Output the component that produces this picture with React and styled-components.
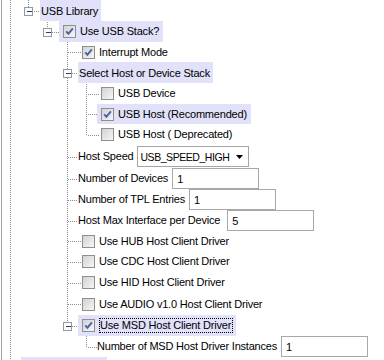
import React from "react";
import styled, { createGlobalStyle } from "styled-components";

const GlobalStyle = createGlobalStyle`
  html, body {
    margin: 0;
    padding: 0;
    background: #fff;
    overflow: hidden;
  }
  body {
    font-family: "Liberation Sans", Arial, sans-serif;
    font-size: 11px;
    color: #000;
  }
`;

// x of the tree line and of the renderer for each depth (page px)
const LINE = { "-1": 10, 0: 28, 1: 47, 2: 67, 3: 86 };
const REND = { "-1": 21, 0: 40, 1: 59, 2: 78, 3: 97 };
const ORIGIN = 2;
const SELECTED = "#e1e1f9";

const rows = [
  { depth: 0, h: 21, kind: "label", text: "USB Library", sel: true, exp: true, last: true, pass: [10] },
  { depth: 1, h: 21, kind: "check", text: "Use USB Stack?", checked: true, sel: true, exp: true, last: true, pass: [10] },
  { depth: 2, h: 20, kind: "check", text: "Interrupt Mode", checked: true, pass: [10] },
  { depth: 2, h: 21, kind: "label", text: "Select Host or Device Stack", sel: true, exp: true, pass: [10] },
  { depth: 3, h: 21, kind: "check", text: "USB Device", pass: [10, 67] },
  { depth: 3, h: 20, kind: "check", text: "USB Host (Recommended)", checked: true, sel: true, pass: [10, 67] },
  { depth: 3, h: 21, kind: "check", text: "USB Host ( Deprecated)", last: true, pass: [10, 67] },
  { depth: 2, h: 23, kind: "combo", text: "Host Speed", value: "USB_SPEED_HIGH", pass: [10] },
  { depth: 2, h: 21, kind: "field", text: "Number of Devices", value: "1", pass: [10] },
  { depth: 2, h: 21, kind: "field", text: "Number of TPL Entries", value: "1", pass: [10] },
  { depth: 2, h: 21, kind: "field", text: "Host Max Interface per Device", value: "5", gap: 7, pass: [10] },
  { depth: 2, h: 20, kind: "check", text: "Use HUB Host Client Driver", pass: [10] },
  { depth: 2, h: 21, kind: "check", text: "Use CDC Host Client Driver", pass: [10] },
  { depth: 2, h: 21, kind: "check", text: "Use HID Host Client Driver", pass: [10] },
  { depth: 2, h: 22, kind: "check", text: "Use AUDIO v1.0 Host Client Driver", pass: [10] },
  { depth: 2, h: 21, kind: "check", text: "Use MSD Host Client Driver", checked: true, sel: true, focus: true, exp: true, last: true, pass: [10] },
  { depth: 3, h: 21, kind: "field", text: "Number of MSD Host Driver Instances", value: "1", last: true, pass: [10] },
  { depth: -1, h: 21, kind: "label", text: "", sel: true, width: 86, pass: [] },
];

function Gutter({ row, top, lead }) {
  const { depth, h, pass, last, exp } = row;
  const lx = LINE[depth] - ORIGIN;
  const w = REND[depth] - ORIGIN + lead;
  const mid = Math.ceil(h / 2);

  const v = (x, y1, y2, k) => (
    <path key={k} d={`M${x + 0.5} ${y1}V${y2}`} strokeDashoffset={(top + y1) % 2} />
  );
  const hz = (y, x1, x2, k) => (
    <path key={k} d={`M${x1} ${y + 0.5}H${x2}`} strokeDashoffset={(x1 + ORIGIN) % 2} />
  );

  const segs = pass.map((x, i) => v(x - ORIGIN, 0, h, "p" + i));
  if (exp) {
    segs.push(v(lx, 0, mid - 4, "up"));
    if (!last) segs.push(v(lx, mid + 5, h, "down"));
    segs.push(hz(mid, lx + 5, w, "elbow"));
  } else {
    segs.push(v(lx, 0, last ? mid + 1 : h, "own"));
    segs.push(hz(mid, lx + 1, w, "elbow"));
  }

  return (
    <GutterSvg width={w} height={h}>
      <g stroke="#8c8c8c" strokeDasharray="1 1" fill="none" shapeRendering="crispEdges">
        {segs}
      </g>
      {exp && (
        <g shapeRendering="crispEdges">
          <rect x={lx - 3.5} y={mid - 3.5} width="8" height="8" fill="#fbfbfb" stroke="#929aa1" />
          <path d={`M${lx - 1} ${mid + 0.5}H${lx + 4}`} stroke="#23406f" />
        </g>
      )}
    </GutterSvg>
  );
}

function CheckBox({ checked }) {
  return (
    <BoxSvg width="13" height="13" viewBox="0 0 13 13">
      <defs>
        <linearGradient id="cbfill" x1="0" y1="0" x2="1" y2="1">
          <stop offset="0" stopColor="#d0d0d0" />
          <stop offset="1" stopColor="#f8f8f8" />
        </linearGradient>
      </defs>
      <rect x="0.5" y="0.5" width="12" height="12" fill="url(#cbfill)" stroke="#8f8f8f" shapeRendering="crispEdges" />
      {checked && (
        <path d="M3.2 6.3L5.4 8.7L9.9 3.4" fill="none" stroke="#4862ad" strokeWidth="1.9" />
      )}
    </BoxSvg>
  );
}

function Arrow() {
  return (
    <svg width="7" height="4" viewBox="0 0 7 4">
      <path d="M0 0H7L3.5 4Z" fill="#000" />
    </svg>
  );
}

function Renderer({ row, lead }) {
  if (row.kind === "label") {
    return (
      <LabelCell $sel={row.sel} $width={row.width}>
        {row.text}
      </LabelCell>
    );
  }
  if (row.kind === "check") {
    return (
      <CheckCell $sel={row.sel} $lead={lead}>
        <CheckBox checked={row.checked} />
        <Text $focus={row.focus}>{row.text}</Text>
      </CheckCell>
    );
  }
  return (
    <EditCell>
      <Text>{row.text}</Text>
      {row.kind === "combo" ? (
        <Combo>
          <ComboValue>{row.value}</ComboValue>
          <Arrow />
        </Combo>
      ) : (
        <Field $gap={row.gap || 4}>{row.value}</Field>
      )}
    </EditCell>
  );
}

export default function App() {
  let top = 0;
  return (
    <>
      <GlobalStyle />
      <Tree>
        {rows.map((row, i) => {
          const lead = row.kind === "check" && !row.sel ? 3 : 0;
          const rowTop = top;
          top += row.h;
          return (
            <Row key={i} $h={row.h}>
              <Gutter row={row} top={rowTop} lead={lead} />
              <Renderer row={row} lead={lead} />
            </Row>
          );
        })}
      </Tree>
    </>
  );
}

const Tree = styled.div`
  margin-left: 1px;
  border-left: 1px solid #a3a3a3;
  min-height: 360px;
  background: #fff;
`;

const Row = styled.div`
  display: flex;
  align-items: stretch;
  height: ${(p) => p.$h}px;
`;

const GutterSvg = styled.svg`
  display: block;
  flex-shrink: 0;
`;

const BoxSvg = styled.svg`
  display: block;
  flex-shrink: 0;
`;

const LabelCell = styled.div`
  display: flex;
  align-items: center;
  box-sizing: border-box;
  padding: 0 3px 0 1px;
  white-space: nowrap;
  letter-spacing: -0.2px;
  background: ${(p) => (p.$sel ? SELECTED : "transparent")};
  ${(p) => (p.$width ? `width: ${p.$width}px;` : "")}
`;

const CheckCell = styled.div`
  display: flex;
  align-items: center;
  gap: 4px;
  padding: 0 4px 0 ${(p) => 4 - p.$lead}px;
  white-space: nowrap;
  background: ${(p) => (p.$sel ? SELECTED : "transparent")};
`;

const Text = styled.span`
  letter-spacing: -0.2px;
  white-space: pre;
  line-height: 13px;
  ${(p) => (p.$focus ? "outline: 1px dotted #000; outline-offset: 0; margin-left: 1px; padding-right: 1px;" : "")}
`;

const EditCell = styled.div`
  display: flex;
  align-items: center;
  white-space: nowrap;
`;

const Combo = styled.div`
  display: flex;
  align-items: center;
  justify-content: space-between;
  box-sizing: border-box;
  width: 112px;
  height: 21px;
  margin-left: 4px;
  padding: 0 5px 0 2px;
  border: 1px solid #a5a5a5;
  background: #fff;
`;

const ComboValue = styled.span`
  font-size: 10.5px;
  letter-spacing: -0.45px;
`;

const Field = styled.div`
  display: flex;
  align-items: center;
  box-sizing: border-box;
  width: 87px;
  height: 21px;
  margin-left: ${(p) => p.$gap}px;
  padding-left: 4px;
  border: 1px solid #a8a8a8;
  background: #fff;
`;
